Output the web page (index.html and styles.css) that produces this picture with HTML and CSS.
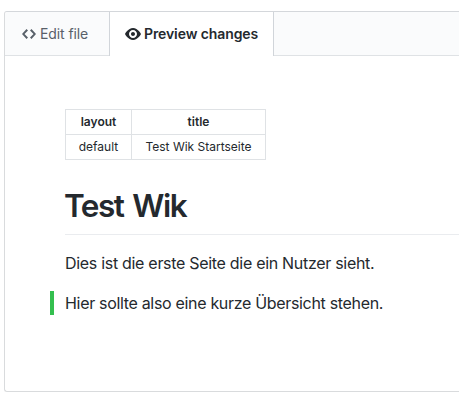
FILE: index.html
```html
<!DOCTYPE html>
<html lang="de">
<head>
<meta charset="utf-8">
<title>Test Wik</title>
<link rel="stylesheet" href="styles.css">
</head>
<body>
<main class="editor">
  <nav class="tabs">
    <a class="tab edit"><svg class="icon" width="14" height="16" viewBox="0 0 14 16"><path fill-rule="evenodd" d="M9.5 3L8 4.5 11.5 8 8 11.5 9.5 13 14 8 9.5 3zm-5 0L0 8l4.500 5L6 11.500 2.500 8 6 4.500 4.500 3z"/></svg><span class="edit-label">Edit file</span></a>
    <a class="tab selected"><svg class="icon" width="16" height="16" viewBox="0 0 16 16"><path fill-rule="evenodd" d="M8.060 2C3 2 0 8 0 8s3 6 8.060 6C13 14 16 8 16 8s-3-6-7.940-6zM8 12c-2.200 0-4-1.780-4-4 0-2.200 1.800-4 4-4 2.220 0 4 1.800 4 4 0 2.220-1.780 4-4 4zm2-4c0 1.110-.890 2-2 2-1.110 0-2-.890-2-2 0-1.110.890-2 2-2 1.110 0 2 .890 2 2z"/></svg><span class="preview-label">Preview changes</span></a>
  </nav>
  <article class="content">
    <table>
      <thead><tr><th>layout</th><th>title</th></tr></thead>
      <tbody><tr><td>default</td><td>Test Wik Startseite</td></tr></tbody>
    </table>
    <h1>Test Wik</h1>
    <p>Dies ist die erste Seite die ein Nutzer sieht.</p>
    <p class="added">Hier sollte also eine kurze Übersicht stehen.</p>
  </article>
</main>
</body>
</html>
```
FILE: styles.css
```css
* { box-sizing: border-box; }
body {
  margin: 0;
  padding: 11px 0 0 4px;
  background: #fff;
  color: #24292e;
  font-family: Inter, "Liberation Sans", sans-serif;
}
.editor {
  height: 381px;
  border: 1px solid #d9dbdd;
  border-top-color: #d4d7db;
  border-right: 0;
  border-radius: 3px 0 0 3px;
}
.tabs {
  display: flex;
  height: 44px;
  background: #fafbfc;
  border-bottom: 1px solid #dfe2e5;
  border-radius: 3px 0 0 0;
}
.tab {
  display: flex;
  align-items: center;
  height: 44px;
  font-size: 14px;
  line-height: 20px;
  white-space: nowrap;
}
.icon { fill: currentColor; flex: none; }
.edit { width: 104px; padding-left: 17px; gap: 4px; color: #586069; }
.selected {
  width: 165px;
  padding-left: 15px;
  gap: 3px;
  background: #fff;
  border: solid #d1d5da;
  border-width: 0 1px;
  font-weight: 600;
}
.edit-label { letter-spacing: -0.1px; }
.preview-label { letter-spacing: -0.1px; }
.content { padding: 53px 0 0 60px; }
table {
  width: 201px;
  table-layout: fixed;
  border-collapse: collapse;
  font-size: 12px;
  line-height: 18px;
}
th, td {
  height: 25px;
  padding: 0;
  border: 1px solid #dfe2e5;
  text-align: center;
  white-space: nowrap;
}
th:first-child { width: 66px; }
th { font-weight: 600; }
h1 {
  height: 50px;
  margin: 25px 0 16px;
  padding-top: 1px;
  border-bottom: 1px solid #eaecef;
  font-size: 31.5px;
  font-weight: 600;
  line-height: 40px;
  letter-spacing: -1.5px;
  word-spacing: 2.5px;
  text-indent: -1px;
}
p {
  margin: 0 0 16px;
  font-size: 16px;
  line-height: 24px;
  letter-spacing: -0.3px;
  white-space: nowrap;
}
.added {
  margin-left: -15px;
  padding-left: 11px;
  border-left: 4px solid #34bf4f;
  letter-spacing: -0.32px;
}
```
